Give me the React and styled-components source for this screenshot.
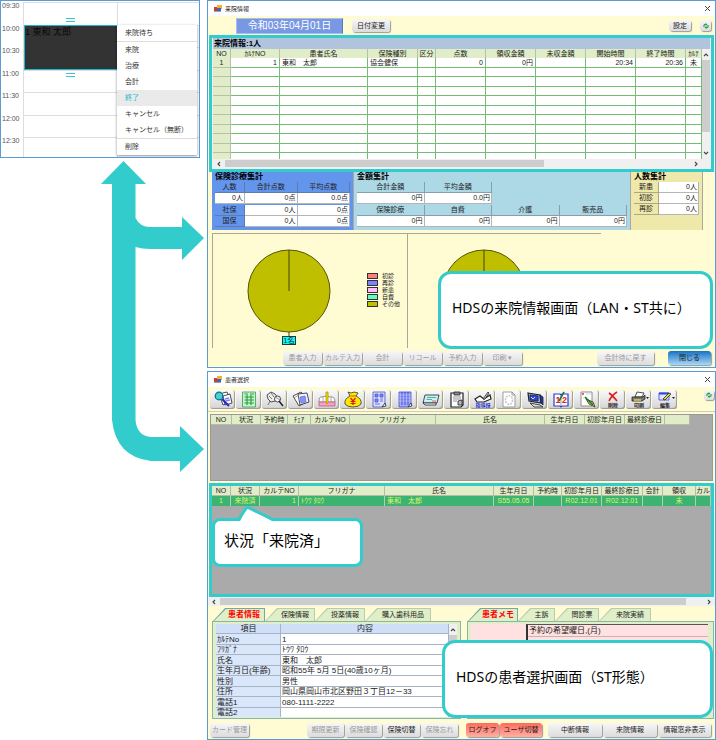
import React from "react";
import styled, { createGlobalStyle } from "styled-components";

const GlobalStyle = createGlobalStyle`
  * { box-sizing: border-box; }
  body {
    margin: 0;
    background: #fff;
    color: #222;
    font-family: "Liberation Sans", "Noto Sans CJK JP", sans-serif;
    font-size: 7px;
    line-height: 8px;
  }
  button {
    margin: 0;
    padding: 0;
    border: 0;
    font: inherit;
    color: inherit;
    white-space: nowrap;
  }
  ul { list-style: none; margin: 0; padding: 0; }
  h2, h3, p { margin: 0; font-weight: normal; }
  table { border-spacing: 0; table-layout: fixed; width: 100%; }
  th, td { padding: 0; font-weight: normal; white-space: nowrap; overflow: hidden; }
  svg { display: block; }
`

const times = ['09:30', '10:00', '10:30', '11:00', '11:30', '12:00', '12:30']

const menuItems = [
  {id: 'menu_01', title: '来院待ち', line: true},
  {id: 'menu_02', title: '来院'},
  {id: 'menu_03', title: '治療'},
  {id: 'menu_04', title: '会計'},
  {id: 'menu_05', title: '終了', active: true},
  {id: 'menu_06', title: 'キャンセル'},
  {id: 'menu_07', title: 'キャンセル（無断）', line: true},
  {id: 'menu_08', title: '削除'},
]

const visitCols = [
  {id: 'no', title: 'NO', width: 18, value: '1', align: 'center'},
  {id: 'chart', title: 'ｶﾙﾃNO', width: 49, value: '1', align: 'right'},
  {id: 'name', title: '患者氏名', value: '東和　太郎'},
  {id: 'kind', title: '保険種別', width: 50, value: '協会健保'},
  {id: 'div', title: '区分', width: 18, value: ''},
  {id: 'point', title: '点数', width: 50, value: '0', align: 'right'},
  {id: 'paid', title: '領収金額', width: 50, value: '0円', align: 'right'},
  {id: 'unpaid', title: '未収金額', width: 50, value: ''},
  {id: 'start', title: '開始時間', width: 50, value: '20:34', align: 'right'},
  {id: 'end', title: '終了時間', width: 50, value: '20:36', align: 'right'},
  {id: 'karte', title: 'ｶﾙﾃ', width: 16, value: '未', align: 'center'},
]

const emptyRows = [1, 2, 3, 4, 5, 6, 7, 8, 9, 10]

const legend = [
  {title: '初診', color: '#ff7f7f'},
  {title: '再診', color: '#7f7fff'},
  {title: '新患', color: '#ffbfff'},
  {title: '自費', color: '#5fffbf'},
  {title: 'その他', color: '#bfbf00'},
]

const visitButtons = ['患者入力', 'カルテ入力', '会計', 'リコール', '予約入力', '印刷 ▾']

const waitCols = [
  {title: 'NO', width: 21},
  {title: '状況', width: 29},
  {title: '予約時', width: 27},
  {title: 'ﾁｪｱ', width: 23},
  {title: 'カルテNO', width: 39},
  {title: 'フリガナ', width: 86},
  {title: '氏名'},
  {title: '生年月日', width: 40},
  {title: '初診年月日', width: 40},
  {title: '最終診療日', width: 40},
  {title: '', width: 25},
]

const doneCols = [
  {title: 'NO', width: 19, value: '1', align: 'center'},
  {title: '状況', width: 29, value: '来院済', align: 'center'},
  {title: 'カルテNO', width: 39, value: '1', align: 'right'},
  {title: 'フリガナ', width: 86, value: 'ﾄｳﾜ ﾀﾛｳ'},
  {title: '氏名', value: '東和　太郎'},
  {title: '生年月日', width: 40, value: 'S55.05.05', align: 'center'},
  {title: '予約時', width: 28, value: ''},
  {title: '初診年月日', width: 40, value: 'R02.12.01', align: 'center'},
  {title: '最終診療日', width: 41, value: 'R02.12.01', align: 'center'},
  {title: '会計', width: 20, value: ''},
  {title: '領収', width: 33, value: '未', align: 'center'},
  {title: 'カル', width: 15, value: ''},
]

const patientTabs = [
  {title: '患者情報', width: 52, active: true},
  {title: '保険情報', width: 50},
  {title: '投薬情報', width: 50},
  {title: '購入歯科用品', width: 66},
]

const memoTabs = [
  {title: '患者メモ', width: 50, active: true},
  {title: '主訴', width: 37},
  {title: '問診票', width: 44},
  {title: '来院実績', width: 52},
]

const patientInfo = [
  {label: 'ｶﾙﾃNo', value: '1'},
  {label: 'ﾌﾘｶﾞﾅ', value: 'ﾄｳﾜ ﾀﾛｳ'},
  {label: '氏名', value: '東和　太郎'},
  {label: '生年月日(年齢)', value: '昭和55年 5月 5日(40歳10ヶ月)'},
  {label: '性別', value: '男性'},
  {label: '住所', value: '岡山県岡山市北区野田３丁目12－33'},
  {label: '電話1', value: '080-1111-2222'},
  {label: '電話2', value: ''},
]

const Page = styled.main`
  display: flex;
  align-items: flex-start;
`

const LeftColumn = styled.div`
  width: 207px;
  flex: none;
`

const RightColumn = styled.div`
  flex: 1;
  min-width: 0;
  display: flex;
  flex-direction: column;
  gap: 3px;
`

/* 予約カレンダー */
const Calendar = styled.section`
  position: relative;
  width: 200px;
  height: 158px;
  overflow: hidden;
  padding-top: 1px;
  border: 1px solid #5b9bd5;
  color: #555;
`

const TimeRow = styled.div`
  display: grid;
  grid-template-columns: 22px 94px 1fr;
  height: ${({$odd}) => $odd ? 22 : 23}px;

  time { padding-left: 1px; }
  span {
    border-top: 1px solid #ddd;
    border-left: 1px solid #ddd;
  }
`

const Event = styled.div`
  position: absolute;
  left: 23px; top: 24px;
  width: 94px;
  height: 45px;
  background: #333;
  border: 1px solid #20b8cc;
  color: #0a0a0a;
  font-size: 9px;
  line-height: 13px;
`

const Handle = styled.i`
  position: absolute;
  left: 41px;
  ${({$pos}) => $pos === 'top' ? 'top: -8px;' : 'bottom: -8px;'}
  width: 9px;
  height: 4px;
  border: solid #35c5d2;
  border-width: 1px 0;
`

const Menu = styled.ul`
  position: absolute;
  left: 116px; top: 24px;
  width: 80px;
  background: #fff;
  border-radius: 1px;
  box-shadow: 0 1px 3px rgba(0, 0, 0, .45);
`

const MenuItem = styled.li`
  border-bottom: ${({$line}) => $line ? '1px solid #ddd' : 0};

  button {
    width: 100%;
    height: 16px;
    padding-left: 8px;
    text-align: left;
    background: ${({$active}) => $active ? '#eaeaea' : 'transparent'};
    color: ${({$active}) => $active ? '#1fb9cc' : '#333'};
  }
`

const Arrows = styled.svg`
  margin: 3px 0 0 101px;
`

/* ウィンドウ共通 */
const Window = styled.section`
  position: relative;
  display: flex;
  flex-direction: column;
  background: #fffbd2;
  border: 1px solid #5b9bd5;
  padding-bottom: 2px;
`

const TitleBar = styled.header`
  display: flex;
  align-items: center;
  gap: 3px;
  height: 15px;
  padding: 0 4px 0 6px;
  background: #fff;

  h2 { flex: 1; font-size: 6px; }
`

const CloseButton = styled.button`
  background: none;
`

const Button = styled.button`
  display: flex;
  align-items: center;
  justify-content: center;
  flex: none;
  width: ${({$width}) => $width || 39}px;
  height: ${({$height}) => $height || 14}px;
  border-radius: 3px;
  background: linear-gradient(#f7f7f7, #dcdcdc);
  box-shadow: 1px 1px 1px #999;
  color: #222;

  &:disabled { color: #999; }
  ${({$kind}) => $kind === 'blue' && 'background: linear-gradient(#1672c4, #a8d8f8);'}
  ${({$kind}) => $kind === 'red' && 'background: linear-gradient(#ff6a5c, #ffb0a4);'}
`

const HeadRow = styled.div`
  display: flex;
  align-items: center;
  height: 19px;
  padding: 0 4px 0 28px;
  gap: 9px;
`

const DateBox = styled.p`
  width: 107px;
  background: #7898e4;
  border: 1px solid #a9bcec;
  border-right-color: #5878c8;
  color: #fff;
  font-size: 10px;
  line-height: 14px;
  text-align: center;
`

const Spacer = styled.div`
  flex: ${({$width}) => $width ? `0 0 ${$width}px` : '1'};
`

const Frame = styled.div`
  position: relative;
  margin: 0 1px;
  border: 3px solid #33cccc;
`

const VisitPanel = styled.div`
  padding: 0 1px 1px;
  background: #f0f0f0;

  h3 {
    padding-left: 1px;
    background: #b0c4de;
    color: #000;
    font-size: 8px;
    font-weight: bold;
    line-height: 11px;
  }
`

const Scroller = styled.div`
  display: flex;
  background: #fff;
`

const VisitTable = styled.table`
  flex: 1;
  min-width: 0;

  th {
    height: 9px;
    background: #e0edc8;
    border-right: 1px solid #b8c0a8;
  }
  td {
    height: 9px;
    padding: 0 2px;
    line-height: 8px;
    border-right: 1px solid #74bd74;
    border-bottom: 1px solid #74bd74;
  }
  tr:nth-child(odd) td { height: 10px; }
  tr:last-child td { height: 6px; border-bottom: 0; }
  td:first-child { background: #e0edc8; border-color: #b8c0a8; }
`

const Td = styled.td`
  text-align: ${({$align}) => $align || 'left'};
`

const VBar = styled.div`
  width: 8px;
  display: flex;
  flex-direction: column;
  align-items: center;
  padding: 3px 0;
  gap: 2px;
  background: #f0f0f0;

  i { width: 8px; height: ${({$thumb}) => $thumb}px; background: #cdcdcd; }
  svg:last-child { margin-top: auto; }
`

const HBar = styled.div`
  display: flex;
  align-items: center;
  gap: 3px;
  height: 9px;
  padding: 0 ${({$end}) => $end || 3}px 0 3px;
  background: #f0f0f0;

  i { width: ${({$thumb}) => $thumb}%; height: 7px; background: #cdcdcd; }
  svg:last-child { margin-left: auto; }
`

const SummaryRow = styled.div`
  display: grid;
  grid-template-columns: 142px 1fr 72px;
  min-height: 58px;
  padding: 0 12px 0 4px;
`

const Summary = styled.div`
  padding: 0 3px 2px;
  background: ${({$color}) => $color};
  border-right: 1px solid #a8a8a0;

  h3 {
    color: #000;
    font-size: 8px;
    font-weight: bold;
    line-height: 10px;
  }
  table + table { margin-top: 1px; }
  th, td {
    height: 11px;
    border-right: 1px solid rgba(90, 90, 90, .45);
    border-bottom: 1px solid rgba(90, 90, 90, .45);
  }
  td {
    padding-right: 1px;
    background: #fff;
    text-align: right;
  }
`

const AmountTable = styled.table`
  width: ${({$width}) => $width}%;
`

const ChartRow = styled.div`
  display: flex;
  margin: 3px 4px 3px;
`

const Chart = styled.div`
  flex: 0 0 39%;
  display: flex;
  align-items: flex-end;
  height: 115px;
  padding: 0 0 2px 34px;
  border-top: 1px solid #aaa79a;
  border-left: 1px solid #aaa79a;
  overflow: hidden;
`

const Legend = styled.ul`
  align-self: center;
  margin-left: 36px;

  li {
    display: flex;
    align-items: center;
    gap: 4px;
    font-size: 6px;
    line-height: 7px;
    white-space: nowrap;
  }
`

const Swatch = styled.i`
  width: 11px;
  height: 6px;
  border: 1px solid #333;
  background: ${({$color}) => $color};
`

const ButtonRow = styled.div`
  display: flex;
  gap: 1px;
  height: 14px;
  padding: 0 4px 0 ${({$start}) => $start}px;
`

const Callout = styled.div`
  position: absolute;
  ${({$place}) => $place}
  display: flex;
  align-items: center;
  padding: 0 0 5px ${({$small}) => $small ? 9 : 11}px;
  background: #fff;
  border: 3px solid #33cccc;
  border-radius: ${({$small}) => $small ? 8 : 13}px;
  color: #000;
  font-family: "Noto Sans", "Noto Sans CJK JP", sans-serif;
  font-size: ${({$small}) => $small ? 15 : 14}px;
  line-height: 20px;
  white-space: nowrap;
`

const Tail = styled.svg`
  position: absolute;
  left: 21px; top: -16px;
`

/* 患者選択 */
const Toolbar = styled.div`
  display: flex;
  align-items: flex-start;
  gap: 1px;
  height: 25px;
  margin-bottom: 2px;
  padding: 3px 1px 0 2px;
  border-bottom: 1px solid #d0cdb4;
`

const ToolButton = styled.button`
  display: flex;
  align-items: center;
  justify-content: center;
  width: 25px;
  height: 19px;
  border-radius: 3px;
  background: linear-gradient(#fafafa, #d4d4d8);
  box-shadow: inset -1px -1px 1px #999;
`

const GrayArea = styled.div`
  height: ${({$height}) => $height}px;
  background: #aaa;
`

const WaitArea = styled(GrayArea)`
  margin: 0 2px 2px;
  padding-right: 22px;
  border: 1px solid #999;
`

const ListTable = styled.table`
  th {
    height: 10px;
    background: #e0edc8;
    border-right: 1px solid #b4bca4;
    border-bottom: 1px solid #b4bca4;
  }
  td {
    height: 10px;
    padding: 0 2px;
    background: #3cb371;
    border-right: 1px solid #b8ccb0;
    color: #ddf56a;
  }
`

const Panels = styled.div`
  display: grid;
  grid-template-columns: 249px 1fr;
  gap: 6px;
  margin: 2px 1px 4px 4px;
`

const Tabs = styled.div`
  display: flex;
  padding-left: 1px;
`

const Tab = styled.button`
  position: relative;
  z-index: 0;
  width: ${({$width}) => $width}px;
  height: 13px;
  padding-left: 10px;
  background: ${({$active}) => $active ? '#74aaa4' : '#b8ccb0'};
  clip-path: polygon(0 100%, 12px 0, 100% 0, 100% 100%);
  color: ${({$active}) => $active ? '#f00' : '#222'};
  font-weight: ${({$active}) => $active ? 'bold' : 'normal'};
  font-size: ${({$active}) => $active ? 8 : 7}px;

  &::before {
    content: "";
    position: absolute;
    inset: 1px 1px 0 1px;
    z-index: -1;
    background: #e0efc8;
    clip-path: polygon(0 100%, 12px 0, 100% 0, 100% 100%);
  }
`

const TabPanel = styled.div`
  display: flex;
  height: 98px;
  padding: 2px 3px 1px;
  background: #e0efc8;
  border: 1px solid #8ab4ae;
  overflow: hidden;
`

const InfoTable = styled.table`
  flex: 1;
  min-width: 0;
  font-size: 8px;

  th, td {
    height: 10px;
    padding-left: 1px;
    line-height: 9px;
    border-right: 1px solid #a8b4c4;
    border-bottom: 1px solid #a8b4c4;
    text-align: left;
  }
  thead th {
    background: #cfdff8;
    text-align: center;
  }
  tbody tr:nth-child(odd) > * { height: 11px; }
  tbody tr:last-child > * { height: 9px; border-bottom: 0; }
  tbody th { background: #dae6fa; }
  td { background: #fff; }
`

const MemoLabel = styled.div`
  width: 55px;
  background: #ffe1e1;
`

const Memo = styled.div`
  flex: 1;
  margin-right: 2px;
  background: #ffe1e1;
  border-left: 2px solid #333;
  border-top: 1px solid #555;

  p {
    padding-left: 1px;
    line-height: 11px;
    border-bottom: 1px solid #c4b4b4;
    font-size: 8px;
  }
`

const Chevron = ({dir}) => {
  const paths = {
    up: 'M1 4 L3 2 L5 4',
    down: 'M1 2 L3 4 L5 2',
    left: 'M4 1 L2 3 L4 5',
    right: 'M2 1 L4 3 L2 5',
  }
  return (
    <svg width="6" height="6" viewBox="0 0 6 6" fill="none" stroke="#444" strokeWidth="1.1">
      <path d={paths[dir]} />
    </svg>
  )
}

const AppIcon = () => (
  <svg width="8" height="7" viewBox="0 0 8 7">
    <rect x="0" y="2" width="3" height="4" fill="#d23c2c" />
    <rect x="3" y="0" width="5" height="4" fill="#f0b428" />
    <rect x="3" y="3" width="4" height="3" fill="#3c64c8" />
    <path d="M0 6.5H7" stroke="#888" strokeWidth=".8" />
  </svg>
)

const CloseIcon = () => (
  <svg width="7" height="7" viewBox="0 0 7 7" stroke="#444" strokeWidth="1">
    <path d="M1 1L6 6M6 1L1 6" />
  </svg>
)

const RefreshIcon = () => (
  <svg width="8" height="8" viewBox="0 0 8 8" fill="none" stroke="#28a03c" strokeWidth="1.2">
    <path d="M2 5V3.5C2 2.3 3.6 2.3 4.4 2.6M6 3V4.5C6 5.7 4.4 5.7 3.6 5.4" />
    <path d="M3.6 1L5.4 2.6L3.6 4ZM4.4 4L2.6 5.4L4.4 7Z" fill="#28a03c" stroke="none" />
  </svg>
)

const Icon = ({children}) => (
  <svg width="20" height="17" viewBox="0 0 20 17" fill="none" stroke="#222" strokeWidth=".8">
    {children}
  </svg>
)

const IconLabel = ({color, children}) => (
  <text x="10" y="16" textAnchor="middle" fontSize="5" fontWeight="bold" fill={color || '#222'} stroke="none">{children}</text>
)

const tools = [
  {id: '患者検索', icon: <>
    <path d="M6 3L14 1L18 10L10 14Z" fill="#fff" />
    <path d="M10 5L17 3L19 12L12 14Z" fill="#fff" />
    <path d="M12 8L16 7M12.500 10L17 9" stroke="#8080ff" strokeWidth="1.500" />
    <circle cx="6" cy="5" r="3.800" fill="#48d0d8" stroke="#087078" strokeWidth="1.200" />
    <path d="M9 8L16 15" stroke="#2428c8" strokeWidth="2" />
  </>},
  {id: '一覧', icon: <>
    <path d="M3.500 1H16.500V16H3.500Z" fill="#c0f8c8" stroke="#3c9850" />
    <path d="M5.500 3H9M11 3H15M5.500 6H15M5.500 9H15M5.500 12H15M8 4V14M12 4V14" stroke="#389848" strokeWidth="1.200" />
  </>},
  {id: '診察', icon: <>
    <path d="M2 4L6 1L10 3L13 7L10 10L6 11L3 8Z" fill="#eee" />
    <path d="M4 5L7 8M6 2L9 6M5 10L3 14" stroke="#555" />
    <circle cx="12.500" cy="8" r="3" fill="#f8f8f8" />
    <path d="M14 10L18 15" strokeWidth="1.500" />
    <path d="M10 6L15 9" stroke="#777" />
  </>},
  {id: '書類', icon: <>
    <path d="M2 5L10 1L17 10L8 15Z" fill="#fff" />
    <path d="M7 3L16 2L18 11L9 14Z" fill="#f4f4ff" />
    <path d="M9 6L14 5L15 11L10 12Z" fill="#8890ff" stroke="#6870e0" />
    <path d="M3 7L8 4" stroke="#888" />
  </>},
  {id: '歯周', icon: <>
    <path d="M2 11Q2 5 5 6Q10 4 13 6Q18 5 18 11Z" fill="#fff" stroke="#777" />
    <path d="M2 11H18V15H2Z" fill="#f8a0c0" stroke="#b86080" />
    <path d="M6 6V11M14 6V11" stroke="#999" />
    <path d="M9 1H11V11L10 13L9 11Z" fill="#f8e000" stroke="#a89800" />
  </>},
  {id: '会計', icon: <>
    <path d="M5 1L8 2L11 1L15 2L13 5Q19 8 18 13Q16 16 10 16Q4 16 2 13Q1 8 7 5Z" fill="#ffe800" stroke="#333" />
    <path d="M7.500 5H13" stroke="#c03020" />
    <path d="M7.500 7L10 10L12.500 7M10 10V14M7.500 10.500H12.500M7.500 12.500H12.500" stroke="#d02010" strokeWidth="1.200" />
  </>},
  {id: '予約表', icon: <>
    <path d="M4 1H16V13L13 16H4Z" fill="#dce0ff" stroke="#4850b8" />
    <path d="M6 3H9V6H6ZM11 3H14V6H11ZM6 8H9V11H6Z" fill="#7880f8" stroke="#5058d8" />
    <path d="M11 8H14M11 10H14M6 13H11" stroke="#5058d8" />
    <path d="M13 16L17 15L16 12Z" fill="#fff" />
  </>},
  {id: '台帳', icon: <>
    <path d="M4 1H16V13L13 16H4Z" fill="#a0a8ff" stroke="#4850b8" />
    <path d="M7 1V14M10 1V14M13 1V14" stroke="#3038c0" />
    <path d="M4 4H16M4 7H16M4 10H16" stroke="#d0d4ff" strokeWidth=".5" />
    <path d="M13 16L17 15L16 12Z" fill="#fff" />
  </>},
  {id: 'カード', icon: <>
    <path d="M4 4H18L16 12H2Z" fill="#c8f4f0" />
    <path d="M2 12H15V14H4Z" fill="#fff" />
    <path d="M6 6.500H15M5.500 8.500H11" stroke="#409898" />
    <path d="M11 10H15" stroke="#e04040" />
  </>},
  {id: 'カルテ', icon: <>
    <path d="M4 2H16V14L14 16H4Z" fill="#fff" strokeWidth="1.200" />
    <path d="M7 1H13V4H7Z" fill="#888" />
    <path d="M6 6H14M6 8H14M6 10H10" stroke="#777" />
    <path d="M11 10L15 9V14H11Z" fill="#bbb" />
  </>},
  {id: '指導録', icon: <>
    <path d="M2 8L7 5L11 8L17 4L18 8L11 11H4Z" fill="#fff" strokeWidth="1.200" />
    <path d="M10 8L15 1L16 2L12 8Z" fill="#ddd" />
    <IconLabel color="#2030d0">指導録</IconLabel>
  </>},
  {id: '文書', icon: <>
    <path d="M4 1H13L16 4V16H4Z" fill="#fff" stroke="#888" />
    <path d="M13 1V4H16" stroke="#888" />
    <ellipse cx="10" cy="9" rx="3.500" ry="4.500" stroke="#c8c8c8" strokeWidth="1.500" strokeDasharray="2 1" />
  </>},
  {id: '画像', icon: <>
    <path d="M3 2L15 4L16 12L4 10Z" fill="#90a8f0" strokeWidth="1.200" />
    <path d="M5 4L13 5V10L5 9Z" fill="#2848e0" />
    <path d="M5 12L15 14L18 16H9Z" fill="#ddd" />
    <path d="M15 4L18 6V14L16 12Z" fill="#2038b8" />
    <path d="M6 6L8 8L10 6" stroke="#fff" />
  </>},
  {id: 'カレンダー', icon: <>
    <path d="M3 3H9L10 4L11 3H17V15H11L10 16L9 15H3Z" fill="#fff" stroke="#2840c8" strokeWidth="1.200" />
    <path d="M10 4V15" stroke="#888" />
    <text x="4.500" y="12" fontSize="9" fontWeight="bold" fill="#e82020" stroke="none">1</text>
    <text x="11" y="12" fontSize="9" fontWeight="bold" fill="#e82020" stroke="none">2</text>
    <path d="M8 10L13 1" stroke="#207838" strokeWidth="1.600" />
  </>},
  {id: 'メモ', icon: <>
    <path d="M4 1H15V15H4Z" fill="#fff" stroke="#777" />
    <path d="M5 3H7" stroke="#e83030" strokeWidth="1.500" />
    <path d="M9 3H14M6 7H9" stroke="#ccc" />
    <path d="M9 8L16 11L18 16L12 13Z" fill="#e0e040" />
    <path d="M8 6L16 14" stroke="#187828" strokeWidth="1.600" />
  </>},
  {id: '削除', icon: <>
    <path d="M6 2Q9 4 14 10M14 1Q9 4 6 10" stroke="#e01818" strokeWidth="1.600" />
    <IconLabel>削除</IconLabel>
  </>},
  {id: '印刷', icon: <>
    <path d="M8 1L15 2L13 6H6Z" fill="#fff" />
    <path d="M3 6H14L16 4V8L13 10H3Z" fill="#777" />
    <path d="M5 9H12" stroke="#e8d838" strokeWidth="1.400" />
    <path d="M17 6H20L18.500 8Z" fill="#222" stroke="none" />
    <IconLabel>印刷</IconLabel>
  </>},
  {id: '編集', icon: <>
    <path d="M4 2H14V9H4Z" fill="#dce4ff" stroke="#3048d8" />
    <path d="M4 2.500H14" stroke="#3048d8" strokeWidth="2" />
    <path d="M8 8L14 2L16 3L10 9Z" fill="#e8d838" />
    <path d="M17 6H20L18.500 8Z" fill="#222" stroke="none" />
    <IconLabel>編集</IconLabel>
  </>},
]

function Cols({cols}){
  return (
    <colgroup>
      {cols.map((col, i) => <col key={i} width={col.width} />)}
    </colgroup>
  )
}

function Title({title}){
  return (
    <TitleBar>
      <AppIcon />
      <h2>{title}</h2>
      <CloseButton aria-label="閉じる"><CloseIcon /></CloseButton>
    </TitleBar>
  )
}

function Pie({label}){
  return (
    <svg width="84" height="100" viewBox="0 0 84 100">
      <circle cx="42" cy="45" r="41" fill="#bfbf00" stroke="#55550a" />
      <path d="M42 4V45M42 86V91" stroke="#444400" />
      {label && (
        <>
          <rect x="35.500" y="90.500" width="13" height="8" fill="#00ffff" stroke="#333" />
          <text x="42" y="97" textAnchor="middle" fontSize="7" fill="#222">{label}</text>
        </>
      )}
    </svg>
  )
}

function Schedule(){
  return (
    <Calendar>
      {
        times.map((time, i)=>{
          return (
            <TimeRow key={time} $odd={i % 2 === 1}>
              <time>{time}</time>
              <span />
              <span />
            </TimeRow>
          )
        })
      }
      <Event>
        1 東和 太郎
        <Handle $pos="top" />
        <Handle $pos="bottom" />
      </Event>
      <Menu>
        {
          menuItems.map(ele=>{
            return (
              <MenuItem key={ele.id} $line={ele.line} $active={ele.active}>
                <button>{ele.title}</button>
              </MenuItem>
            )
          })
        }
      </Menu>
    </Calendar>
  )
}

function VisitWindow(){
  return (
    <Window>
      <Title title="来院情報" />
      <HeadRow>
        <DateBox>令和03年04月01日</DateBox>
        <Button $width={38} $height={13}>日付変更</Button>
        <Spacer />
        <Button $width={22} $height={11}>設定</Button>
        <Button $width={11} $height={11} aria-label="更新"><RefreshIcon /></Button>
      </HeadRow>
      <Frame>
        <VisitPanel>
          <h3>来院情報:1人</h3>
          <Scroller>
            <VisitTable>
              <Cols cols={visitCols} />
              <thead>
                <tr>{visitCols.map(col => <th key={col.id}>{col.title}</th>)}</tr>
              </thead>
              <tbody>
                <tr>{visitCols.map(col => <Td key={col.id} $align={col.align}>{col.value}</Td>)}</tr>
                {
                  emptyRows.map(row=>{
                    return (
                      <tr key={row}>{visitCols.map(col => <td key={col.id}></td>)}</tr>
                    )
                  })
                }
              </tbody>
            </VisitTable>
            <VBar $thumb={72}><Chevron dir="up" /><i /><Chevron dir="down" /></VBar>
          </Scroller>
          <HBar $thumb={66} $end={11}><Chevron dir="left" /><i /><Chevron dir="right" /></HBar>
        </VisitPanel>
      </Frame>

      <SummaryRow>
        <Summary $color="#6495ed">
          <h3>保険診療集計</h3>
          <table>
            <Cols cols={[{width: 30}, {}, {}]} />
            <tbody>
              <tr><th>人数</th><th>合計点数</th><th>平均点数</th></tr>
              <tr><td>0人</td><td>0点</td><td>0.0点</td></tr>
            </tbody>
          </table>
          <table>
            <Cols cols={[{width: 30}, {}, {}]} />
            <tbody>
              <tr><th>社保</th><td>0人</td><td>0点</td></tr>
              <tr><th>国保</th><td>0人</td><td>0点</td></tr>
            </tbody>
          </table>
        </Summary>
        <Summary $color="#add8e6">
          <h3>金額集計</h3>
          <AmountTable $width={50}>
            <tbody>
              <tr><th>合計金額</th><th>平均金額</th></tr>
              <tr><td>0円</td><td>0.0円</td></tr>
            </tbody>
          </AmountTable>
          <AmountTable $width={100}>
            <tbody>
              <tr><th>保険診療</th><th>自費</th><th>介護</th><th>販売品</th></tr>
              <tr><td>0円</td><td>0円</td><td>0円</td><td>0円</td></tr>
            </tbody>
          </AmountTable>
        </Summary>
        <Summary $color="#eee8aa">
          <h3>人数集計</h3>
          <table>
            <Cols cols={[{width: 25}, {}]} />
            <tbody>
              <tr><th>新患</th><td>0人</td></tr>
              <tr><th>初診</th><td>0人</td></tr>
              <tr><th>再診</th><td>0人</td></tr>
            </tbody>
          </table>
        </Summary>
      </SummaryRow>

      <ChartRow>
        <Chart>
          <Pie label="1名" />
          <Legend>
            {legend.map(ele => <li key={ele.title}><Swatch $color={ele.color} />{ele.title}</li>)}
          </Legend>
        </Chart>
        <Chart><Pie /></Chart>
      </ChartRow>

      <ButtonRow $start={75}>
        {visitButtons.map(title => <Button key={title} disabled>{title}</Button>)}
        <Spacer />
        <Button $width={57} disabled>会計待に戻す</Button>
        <Spacer $width={12} />
        <Button $width={43} $kind="blue">閉じる</Button>
      </ButtonRow>

      <Callout $place="right: 2px; bottom: 18px; width: 275px; height: 78px;">
        HDSの来院情報画面（LAN・ST共に）
      </Callout>
    </Window>
  )
}

function PatientWindow(){
  return (
    <Window>
      <Title title="患者選択" />
      <Toolbar>
        {
          tools.map(tool=>{
            return (
              <ToolButton key={tool.id} aria-label={tool.id}>
                <Icon>{tool.icon}</Icon>
              </ToolButton>
            )
          })
        }
        <Spacer />
        <Button $width={10} $height={10} aria-label="更新"><RefreshIcon /></Button>
      </Toolbar>

      <WaitArea $height={67}>
        <ListTable>
          <Cols cols={waitCols} />
          <thead>
            <tr>{waitCols.map((col, i) => <th key={i}>{col.title}</th>)}</tr>
          </thead>
        </ListTable>
      </WaitArea>

      <Frame>
        <GrayArea $height={108}>
          <ListTable>
            <Cols cols={doneCols} />
            <thead>
              <tr>{doneCols.map(col => <th key={col.title}>{col.title}</th>)}</tr>
            </thead>
            <tbody>
              <tr>{doneCols.map(col => <Td key={col.title} $align={col.align}>{col.value}</Td>)}</tr>
            </tbody>
          </ListTable>
        </GrayArea>
        <Callout $small $place="left: 0; top: 32px; width: 151px; height: 49px;">
          <Tail width="44" height="18" viewBox="0 0 44 18">
            <path d="M3 18L11 3L40 18Z" fill="#fff" />
            <path d="M2 15L11 2L38 15" fill="none" stroke="#33cccc" strokeWidth="3" />
          </Tail>
          状況「来院済」
        </Callout>
      </Frame>
      <HBar $thumb={93}><Chevron dir="left" /><i /><Chevron dir="right" /></HBar>

      <Panels>
        <div>
          <Tabs>
            {patientTabs.map(tab => <Tab key={tab.title} $width={tab.width} $active={tab.active}>{tab.title}</Tab>)}
          </Tabs>
          <TabPanel>
            <InfoTable>
              <Cols cols={[{width: 65}, {}]} />
              <thead>
                <tr><th>項目</th><th>内容</th></tr>
              </thead>
              <tbody>
                {
                  patientInfo.map(ele=>{
                    return (
                      <tr key={ele.label}><th>{ele.label}</th><td>{ele.value}</td></tr>
                    )
                  })
                }
              </tbody>
            </InfoTable>
            <VBar $thumb={40}><Chevron dir="up" /><i /><Chevron dir="down" /></VBar>
          </TabPanel>
        </div>
        <div>
          <Tabs>
            {memoTabs.map(tab => <Tab key={tab.title} $width={tab.width} $active={tab.active}>{tab.title}</Tab>)}
          </Tabs>
          <TabPanel>
            <MemoLabel />
            <Memo><p>予約の希望曜日,(月)</p></Memo>
          </TabPanel>
        </div>
      </Panels>

      <ButtonRow $start={2}>
        <Button disabled>カード管理</Button>
        <Spacer />
        <Button $width={37} disabled>期限更新</Button>
        <Button $width={37} disabled>保険確認</Button>
        <Button $width={37}>保険切替</Button>
        <Button $width={37} disabled>保険忘れ</Button>
        <Spacer $width={6} />
        <Button $width={33} $kind="red">ログオフ</Button>
        <Button $width={42} $kind="red">ユーザ切替</Button>
        <Spacer $width={4} />
        <Button $width={54}>中断情報</Button>
        <Button $width={54}>来院情報</Button>
        <Button $width={53}>情報窓非表示</Button>
      </ButtonRow>

      <Callout $place="right: 2px; bottom: 21px; width: 271px; height: 78px;">
        HDSの患者選択画面（ST形態）
      </Callout>
    </Window>
  )
}

export default function App(){
  return (
    <>
      <GlobalStyle />
      <Page>
        <LeftColumn>
          <Schedule />
          <Arrows width="104" height="312" viewBox="0 0 104 312" fill="#33cccc">
            <path d="M22.500 0L45 23H34.500V57Q39 66 49 66H81V56L103 77L81 99V88H49Q41 88 34.500 86V259Q36 275 50 276H79V265L103 288L79 311V300H50Q15 296 11 259V23H0Z" />
          </Arrows>
        </LeftColumn>
        <RightColumn>
          <VisitWindow />
          <PatientWindow />
        </RightColumn>
      </Page>
    </>
  )
}
